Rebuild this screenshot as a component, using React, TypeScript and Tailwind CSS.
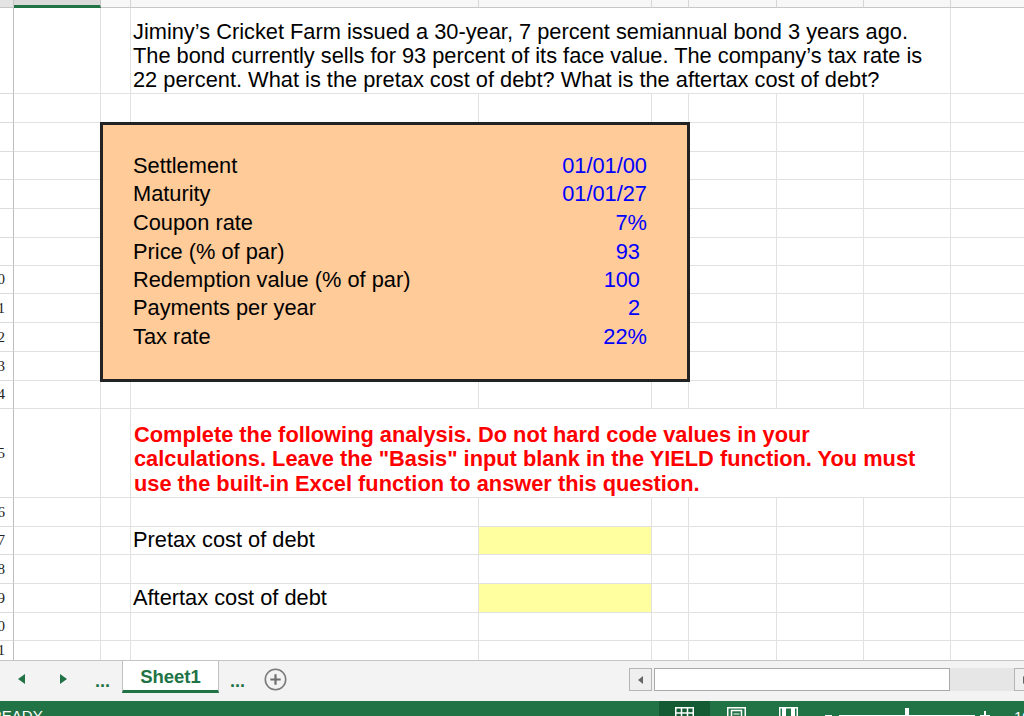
import React from "react";

function covered(r: number, c: number) {
  if (r === 2 && c >= 4 && c <= 9) return true;
  if (r >= 4 && r <= 12 && c >= 3 && c <= 6) return true;
  if (r === 14 && c >= 4 && c <= 9) return true;
  return false;
}

const boxRows: [string, string, boolean][] = [
  ["Settlement", "01/01/00", false],
  ["Maturity", "01/01/27", false],
  ["Coupon rate", "7%", false],
  ["Price (% of par)", "93", true],
  ["Redemption value (% of par)", "100", true],
  ["Payments per year", "2", true],
  ["Tax rate", "22%", false],
];

function Sheet() {
  const cells: React.ReactNode[] = [];
  for (let r = 1; r <= 20; r++) {
    for (let c = 1; c <= 10; c++) {
      if (covered(r, c)) continue;
      const key = `${r}-${c}`;
      const last = r === 20;
      if (r === 1) {
        if (c === 1)
          cells.push(<div key={key} className="bg-[#e4e4e4] border-r border-b border-[#c6c6c6]" />);
        else if (c === 2)
          cells.push(
            <div key={key} className="bg-[#dadada] border-r border-r-[#c6c6c6] border-b-[3px] border-b-[#217346]" />
          );
        else
          cells.push(
            <div key={key} className="bg-[#f7f7f7] border-r border-b border-r-[#d6d6d6] border-b-[#c6c6c6]" />
          );
        continue;
      }
      if (c === 1) {
        const label = r >= 9 ? String(r + 1) : "";
        cells.push(
          <div
            key={key}
            className={
              last
                ? "flex items-center justify-end overflow-hidden pr-[8px] border-r border-[#bdbdbd] bg-white font-['Liberation_Serif',serif] text-[15px] text-[#222]"
                : "flex items-center justify-end overflow-hidden pr-[8px] border-r border-b border-r-[#bdbdbd] border-b-[#dcdcdc] bg-white font-['Liberation_Serif',serif] text-[15px] text-[#222]"
            }
          >
            {label}
          </div>
        );
        continue;
      }
      if (c === 4 && (r === 16 || r === 18)) {
        cells.push(
          <div
            key={key}
            className="flex items-center pl-[2px] border-r border-b border-[#e1e1e1] text-[21.8px] text-black whitespace-nowrap"
          >
            {r === 16 ? "Pretax cost of debt" : "Aftertax cost of debt"}
          </div>
        );
        continue;
      }
      if (c === 5 && (r === 16 || r === 18)) {
        cells.push(<div key={key} className="bg-[#ffff9f] border-r border-b border-[#e1e1e1]" />);
        continue;
      }
      cells.push(
        <div
          key={key}
          className={last ? "border-r border-[#e1e1e1]" : "border-r border-b border-[#e1e1e1]"}
        />
      );
    }
  }

  return (
    <div className="grid w-[1024px] h-[660px] overflow-hidden grid-cols-[14px_87px_30px_348px_173px_37px_88px_87px_87px_87px] grid-rows-[8px_86px_29px_29px_28px_29px_29px_28px_28px_29px_29px_29px_28px_89px_29px_28px_29px_29px_28px_19px]">
      {cells}
      <div className="col-start-4 col-span-6 row-start-2 flex flex-col justify-end pl-[2px] pb-[1px] border-r border-b border-[#e1e1e1] bg-white text-[21.8px] leading-[24px] text-black whitespace-nowrap">
        <div>Jiminy’s Cricket Farm issued a 30-year, 7 percent semiannual bond 3 years ago.</div>
        <div>The bond currently sells for 93 percent of its face value. The company’s tax rate is</div>
        <div>22 percent. What is the pretax cost of debt? What is the aftertax cost of debt?</div>
      </div>
      <div className="col-start-3 col-span-4 row-start-4 row-span-9 bg-[#fecb99] border-2 border-[#222] ring-1 ring-[#222] grid grid-rows-[27px_28px_29px_29px_28px_28px_29px_29px_1fr]">
        <div />
        {boxRows.map(([label, value, num]) => (
          <div key={label} className="flex items-center justify-between pl-[30px] text-[21.8px] text-black whitespace-nowrap">
            <span>{label}</span>
            <span className={num ? "pr-[47px] text-[#0000ff]" : "pr-[40px] text-[#0000ff]"}>{value}</span>
          </div>
        ))}
        <div />
      </div>
      <div className="col-start-4 col-span-6 row-start-14 flex flex-col justify-end pl-[3px] pb-[1px] border-r border-b border-[#e1e1e1] bg-white text-[21.8px] leading-[24.5px] font-bold text-[#ff0000] whitespace-nowrap">
        <div>Complete the following analysis. Do not hard code values in your</div>
        <div>calculations. Leave the "Basis" input blank in the YIELD function. You must</div>
        <div>use the built-in Excel function to answer this question.</div>
      </div>
    </div>
  );
}

function TabBar() {
  return (
    <div className="flex h-[41px] w-[1024px] overflow-hidden border-t border-[#c4c4c4] bg-[#f3f3f3]">
      <div className="flex w-[629px] shrink-0 items-start">
        <div className="flex h-[36px] w-[122px] shrink-0 items-center">
          <svg className="ml-[18px] shrink-0" width="7" height="10" viewBox="0 0 7 10">
            <path d="M7 0 L0 5 L7 10 Z" fill="#217346" />
          </svg>
          <svg className="ml-[35px] shrink-0" width="7" height="10" viewBox="0 0 7 10">
            <path d="M0 0 L7 5 L0 10 Z" fill="#217346" />
          </svg>
          <span className="ml-[28px] text-[18px] font-bold text-[#217346] leading-none pt-[4px]">...</span>
        </div>
        <div className="flex h-[32px] w-[97px] shrink-0 items-center justify-center pt-[2px] bg-white border-x border-[#c0c0c0] border-b-[3px] border-b-[#217346] text-[18.5px] font-bold text-[#217346]">
          Sheet1
        </div>
        <div className="flex h-[36px] items-center">
          <span className="ml-[11px] text-[18px] font-bold text-[#217346] leading-none pt-[4px]">...</span>
          <svg className="ml-[19px] shrink-0" width="23" height="23" viewBox="0 0 23 23">
            <circle cx="11.5" cy="11.5" r="10.2" fill="none" stroke="#7b7b7b" strokeWidth="1.6" />
            <path d="M11.5 6.3 V16.7 M6.3 11.5 H16.7" stroke="#6f6f6f" strokeWidth="2.2" />
          </svg>
        </div>
      </div>
      <div className="flex shrink-0 items-start pt-[7px]">
        <div className="flex h-[23px] w-[23px] shrink-0 items-center justify-center border border-[#b5b5b5] bg-[#efefef]">
          <svg width="5" height="8" viewBox="0 0 5 8">
            <path d="M5 0 L0 4 L5 8 Z" fill="#666" />
          </svg>
        </div>
        <div className="ml-[2px] h-[23px] w-[296px] shrink-0 border border-[#a9a9a9] bg-white" />
        <div className="h-[23px] w-[64px] shrink-0 bg-[#e6e6e6]" />
        <div className="flex h-[23px] w-[23px] shrink-0 items-center justify-center border border-[#b5b5b5] bg-[#efefef]">
          <svg width="5" height="8" viewBox="0 0 5 8">
            <path d="M0 0 L5 4 L0 8 Z" fill="#666" />
          </svg>
        </div>
      </div>
    </div>
  );
}

function StatusBar() {
  return (
    <div className="flex h-[30px] w-[1024px] overflow-hidden items-center bg-[#217346] text-white">
      <div className="w-[659px] shrink-0 overflow-hidden">
        <span className="-ml-[9px] text-[15px] leading-none">READY</span>
      </div>
      <div className="flex h-full w-[51px] shrink-0 items-center justify-center bg-[#145a32]">
        <svg width="19" height="18" viewBox="0 0 19 18">
          <rect x="0.75" y="0.75" width="17.5" height="16.5" fill="none" stroke="white" strokeWidth="1.5" />
          <path d="M6.5 0 V18 M12.5 0 V18 M0 6 H19 M0 11.5 H19" stroke="white" strokeWidth="1.5" />
        </svg>
      </div>
      <div className="flex w-[52px] shrink-0 items-center justify-center">
        <svg width="19" height="18" viewBox="0 0 19 18">
          <rect x="0.75" y="0.75" width="17.5" height="16.5" fill="none" stroke="white" strokeWidth="1.5" />
          <rect x="4.5" y="3.5" width="10" height="11" fill="none" stroke="white" strokeWidth="1.5" />
          <path d="M6.5 7 H12.5 M6.5 10 H12.5" stroke="white" strokeWidth="1.2" />
        </svg>
      </div>
      <div className="flex w-[52px] shrink-0 items-center justify-center">
        <svg width="19" height="18" viewBox="0 0 19 18">
          <rect x="0.75" y="0.75" width="17.5" height="16.5" fill="none" stroke="white" strokeWidth="1.5" />
          <rect x="3" y="0" width="4" height="18" fill="white" />
          <rect x="12" y="0" width="4" height="18" fill="white" />
        </svg>
      </div>
      <div className="ml-[11px] h-[2px] w-[7px] shrink-0 bg-white" />
      <div className="ml-[7px] flex h-[2px] w-[136px] shrink-0 items-center bg-white">
        <div className="ml-[66px] h-[16px] w-[4px] shrink-0 bg-white" />
      </div>
      <svg className="ml-[5px] shrink-0" width="10" height="10" viewBox="0 0 10 10">
        <path d="M5 0 V10 M0 5 H10" stroke="white" strokeWidth="2" />
      </svg>
      <span className="ml-[24px] shrink-0 text-[15px] leading-none whitespace-nowrap">100%</span>
    </div>
  );
}

export default function App() {
  return (
    <div className="h-[716px] w-[1024px] overflow-hidden bg-white font-['Liberation_Sans',Arial,sans-serif]">
      <Sheet />
      <TabBar />
      <StatusBar />
    </div>
  );
}
